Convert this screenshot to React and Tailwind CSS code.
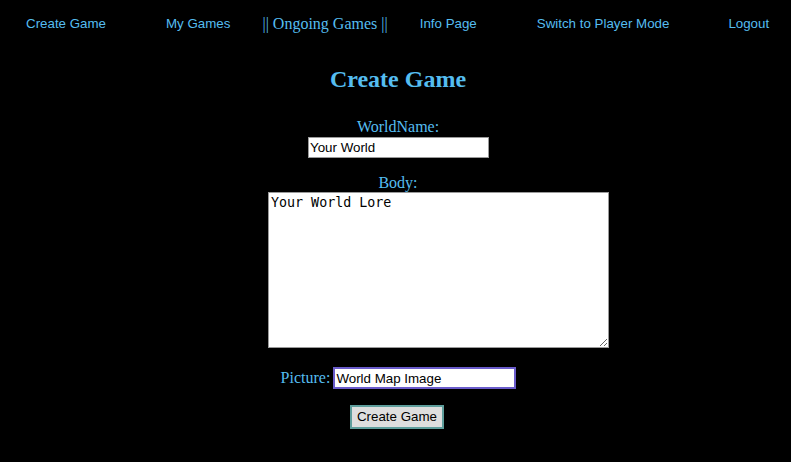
import React from "react";

export default function App() {
  const sans = { fontFamily: '"Liberation Sans", Arial, sans-serif' };
  const serif = { fontFamily: '"Liberation Serif", "Times New Roman", serif' };
  return (
    <div className="min-h-[462px] w-full bg-black text-[#55bdf0]">
      <nav className="flex h-[46px] items-center pt-[2px] pl-[26px] text-[13.33px]" style={sans}>
        <a className="mr-[60px]">Create Game</a>
        <a className="mr-[32px]">My Games</a>
        <span className="mr-[32px] text-[16px]" style={serif}>|| Ongoing Games ||</span>
        <a className="mr-[60px]">Info Page</a>
        <a className="mr-[59px]">Switch to Player Mode</a>
        <a>Logout</a>
      </nav>
      <div className="flex flex-col items-center" style={serif}>
        <h2 className="mt-[19px] ml-[5px] h-[28px] text-[24px] font-bold leading-[28px]">Create Game</h2>
        <label className="mt-[25px] ml-[5px] h-[18px] text-[16px] leading-[18px]">WorldName:</label>
        <input
          className="mt-[1px] ml-[6px] h-[21px] w-[181px] border border-[#9a9a9a] bg-white px-[1px] text-[13.33px] text-black outline-none"
          style={sans}
          defaultValue="Your World"
        />
        <label className="mt-[16px] ml-[5px] h-[18px] text-[16px] leading-[18px]">Body:</label>
        <textarea
          className="ml-[86px] h-[156px] w-[341px] border border-[#9a9a9a] bg-white p-[2px] text-[13.33px] leading-[16px] text-black outline-none"
          style={{ fontFamily: '"DejaVu Sans Mono", monospace' }}
          defaultValue="Your World Lore"
        />
        <div className="mt-[19px] ml-[6px] flex h-[22px] items-center">
          <label className="mr-[3px] text-[16px]">Picture:</label>
          <input
            autoFocus
            className="h-[22px] w-[183px] border-2 border-[#6a5ccb] bg-white px-[1px] text-[13.33px] text-black outline-none"
            style={sans}
            defaultValue="World Map Image"
          />
        </div>
        <button
          className="mt-[16px] ml-[3px] h-[24px] w-[94px] border-2 border-[#5e9e9c] bg-[#dedede] text-[13.33px] text-black"
          style={sans}
        >
          Create Game
        </button>
      </div>
    </div>
  );
}
